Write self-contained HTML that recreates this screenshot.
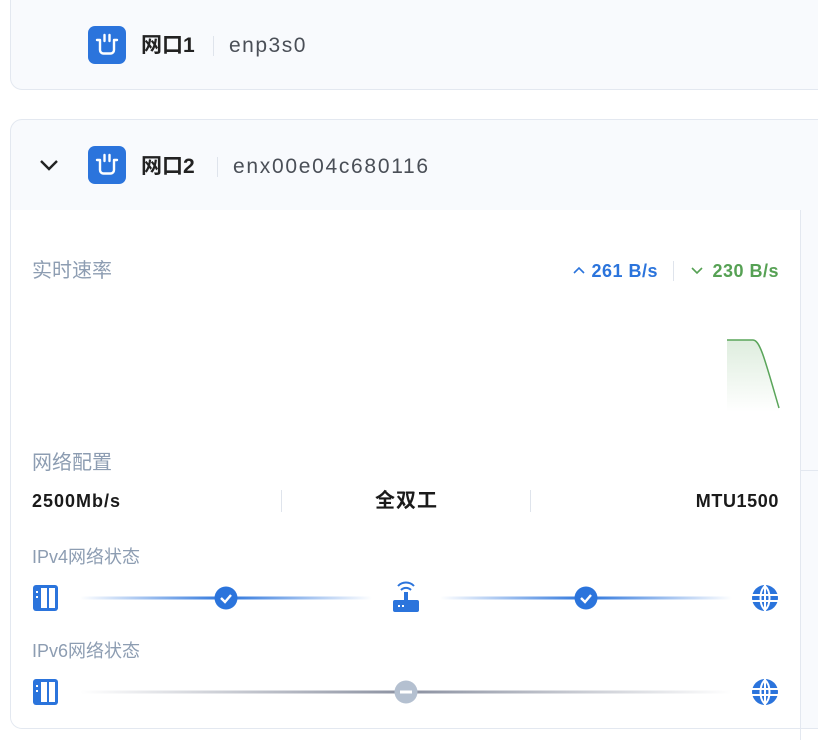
<!DOCTYPE html>
<html><head><meta charset="utf-8"><style>
*{margin:0;padding:0;box-sizing:border-box}
body{width:818px;height:736px;background:#fff;position:relative;overflow:hidden;font-family:"Liberation Sans","Noto Sans CJK SC",sans-serif}
.a{position:absolute;white-space:nowrap}
.card{position:absolute;border:1px solid #e3e8f0;border-radius:12px;background:#f8fafd}
.ic{position:absolute;width:38px;height:38px;border-radius:7px;background:#2b74dc}
.t{position:absolute;font-size:21px;color:#222;line-height:24px;white-space:nowrap}
.lbl{position:absolute;font-size:20px;color:#8d9db2;line-height:22px;white-space:nowrap}
.v{position:absolute;font-size:18px;color:#1a1a1a;font-weight:700;line-height:20px;letter-spacing:1px;white-space:nowrap}
.sep{position:absolute;width:1px;background:#dfe4ec}
</style></head><body>
<div class="card" style="left:10px;top:-12px;width:830px;height:102px"></div>
<div class="ic" style="left:88px;top:26px"><svg width="38" height="38" viewBox="0 0 38 38"><path d="M9 14h3v10a3.5 3.5 0 0 0 3.5 3.5h7A3.5 3.5 0 0 0 26 24V14h3M16.5 9v6M21.5 9v6" fill="none" stroke="#fff" stroke-width="2.4" stroke-linejoin="round" stroke-linecap="round"/></svg></div>
<div class="t" style="left:141px;top:34px;font-weight:700">网口1</div>
<div class="sep" style="left:213px;top:36px;height:20px"></div>
<div class="t" style="left:229px;top:34px;color:#4a4f57;letter-spacing:1.5px">enp3s0</div>

<div class="card" style="left:10px;top:119px;width:830px;height:610px;overflow:hidden">
<div class="a" style="left:0;top:90px;width:790px;height:530px;background:#fff"></div>
</div>
<svg class="a" style="left:38px;top:157px" width="22" height="16"><path d="M3 4l8 8 8-8" fill="none" stroke="#222" stroke-width="2.4"/></svg>
<div class="ic" style="left:88px;top:146px"><svg width="38" height="38" viewBox="0 0 38 38"><path d="M9 14h3v10a3.5 3.5 0 0 0 3.5 3.5h7A3.5 3.5 0 0 0 26 24V14h3M16.5 9v6M21.5 9v6" fill="none" stroke="#fff" stroke-width="2.4" stroke-linejoin="round" stroke-linecap="round"/></svg></div>
<div class="t" style="left:141px;top:155px;font-weight:700">网口2</div>
<div class="sep" style="left:217px;top:157px;height:20px"></div>
<div class="t" style="left:233px;top:155px;color:#4a4f57;letter-spacing:1.7px">enx00e04c680116</div>

<div class="a" style="left:800px;top:210px;width:1px;height:530px;background:#e3e8f0"></div>
<div class="a" style="left:800px;top:470px;width:20px;height:1px;background:#e3e8f0"></div>

<div class="lbl" style="left:32px;top:260px">实时速率</div>
<svg class="a" style="left:572px;top:264px" width="14" height="12"><path d="M2 9l5-5 5 5" fill="none" stroke="#2b74dc" stroke-width="1.6"/></svg>
<div class="a" style="right:160px;top:261px;font-size:18px;line-height:20px;color:#2b74dc;font-weight:700;letter-spacing:.5px">261 B/s</div>
<div class="sep" style="left:673px;top:261px;height:20px"></div>
<svg class="a" style="left:690px;top:264px" width="14" height="12"><path d="M2 4l5 5 5-5" fill="none" stroke="#56a154" stroke-width="1.6"/></svg>
<div class="a" style="right:39px;top:261px;font-size:18px;line-height:20px;color:#56a154;font-weight:700;letter-spacing:.5px">230 B/s</div>
<svg class="a" style="left:720px;top:330px" width="70" height="90">
<defs><linearGradient id="g" x1="0" y1="0" x2="0" y2="1"><stop offset="0" stop-color="#5aa55a" stop-opacity=".2"/><stop offset="1" stop-color="#5aa55a" stop-opacity="0"/></linearGradient></defs>
<path d="M7 10H33C40 10 45 30 59 78V82H7Z" fill="url(#g)"/>
<path d="M7 10H33C40 10 45 30 59 78" fill="none" stroke="#5aa55a" stroke-width="1.5"/>
</svg>

<div class="lbl" style="left:32px;top:452px">网络配置</div>
<div class="v" style="left:32px;top:491px">2500Mb/s</div>
<div class="sep" style="left:281px;top:490px;height:22px"></div>
<div class="v" style="left:375px;top:491px;font-size:20px;letter-spacing:1px">全双工</div>
<div class="sep" style="left:530px;top:490px;height:22px"></div>
<div class="v" style="right:39px;top:491px;letter-spacing:.6px">MTU1500</div>

<div class="lbl" style="left:32px;top:546px;font-size:18px">IPv4网络状态</div>
<div class="lbl" style="left:32px;top:640px;font-size:18px">IPv6网络状态</div>

<svg class="a" style="left:0;top:570px" width="800" height="150">
<defs>
<linearGradient id="b" x1="0" x2="1"><stop offset="0" stop-color="#2b74dc" stop-opacity="0"/><stop offset=".5" stop-color="#2b74dc"/><stop offset="1" stop-color="#2b74dc" stop-opacity="0"/></linearGradient>
<linearGradient id="gr" x1="0" x2="1"><stop offset="0" stop-color="#8a90a0" stop-opacity="0"/><stop offset=".5" stop-color="#8a90a0"/><stop offset="1" stop-color="#8a90a0" stop-opacity="0"/></linearGradient>
<g id="srv"><rect x="0" y="0" width="25" height="26" rx="3" fill="#2b74dc"/><rect x="8" y="3" width="6" height="20" fill="#fff"/><rect x="16" y="3" width="6" height="20" fill="#fff"/><rect x="3" y="6" width="2" height="2" fill="#fff"/><rect x="3" y="11" width="2" height="2" fill="#fff"/></g>
<g id="glb"><circle cx="13" cy="13" r="13" fill="#2b74dc"/><path d="M13 0v26M0 10h26M0 16h26M13 1C7 6 7 20 13 25M13 1C19 6 19 20 13 25" fill="none" stroke="#fff" stroke-width="2"/></g>
</defs>
<use href="#srv" x="33" y="15"/>
<rect x="80" y="26.5" width="292" height="3" fill="url(#b)"/>
<circle cx="226" cy="28" r="11.5" fill="#2b74dc"/><path d="M221 28l4 4 6-7" fill="none" stroke="#fff" stroke-width="2.4"/>
<g fill="#2b74dc"><rect x="393" y="30" width="26" height="12" rx="2"/><rect x="404" y="22" width="4" height="9"/></g>
<path d="M401 20a7 7 0 0 1 10 0M398 16a11 11 0 0 1 16 0" fill="none" stroke="#2b74dc" stroke-width="2"/>
<rect x="398" y="35" width="2" height="2" fill="#fff"/><rect x="402" y="35" width="2" height="2" fill="#fff"/>
<rect x="440" y="26.5" width="292" height="3" fill="url(#b)"/>
<circle cx="586" cy="28" r="11.5" fill="#2b74dc"/><path d="M581 28l4 4 6-7" fill="none" stroke="#fff" stroke-width="2.4"/>
<use href="#glb" x="752" y="15"/>
<use href="#srv" x="33" y="109"/>
<rect x="80" y="120.5" width="652" height="3" fill="url(#gr)"/>
<circle cx="406" cy="122" r="11.5" fill="#b4c0d0"/><rect x="400" y="120.5" width="12" height="3" fill="#fff"/>
<use href="#glb" x="752" y="109"/>
</svg>
</body></html>
